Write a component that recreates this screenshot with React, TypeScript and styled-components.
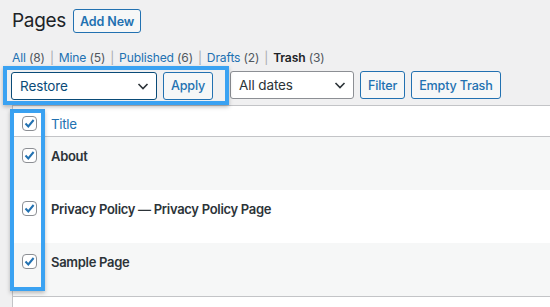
import { styled, createGlobalStyle } from 'styled-components';

const GlobalStyle = createGlobalStyle`
    html, body {
        margin: 0;
        padding: 0;
        background: #f0f0f1;
    }
    body {
        font-family: Inter, "Noto Sans", sans-serif;
        font-size: 13px;
        color: #1d2327;
        overflow: hidden;
    }
`;

const Page = styled.div`
    width: 550px;
    height: 307px;
    overflow: hidden;
    padding-left: 12px;
    box-sizing: border-box;
`;

const Heading = styled.div`
    display: flex;
    align-items: center;
    gap: 7px;
    padding-top: 7px;
    height: 28px;
`;

const Title = styled.h1`
    margin: 0;
    font-size: 19px;
    font-weight: 400;
    letter-spacing: -0.3px;
    line-height: 28px;
    color: #1d2327;
`;

const OutlineButton = styled.button`
    height: 24px;
    padding: 0 6px;
    border: 1px solid #2271b1;
    border-radius: 3px;
    background: #f6f7f7;
    color: #2271b1;
    font-family: inherit;
    font-size: 12.5px;
    font-weight: 600;
    letter-spacing: -0.1px;
`;

const Views = styled.ul`
    display: flex;
    list-style: none;
    margin: 13px 0 0;
    padding: 0;
    height: 18px;
    align-items: center;
    font-size: 12.1px;
    color: #50575e;
    letter-spacing: -0.15px;

    & > li + li::before {
        content: '|';
        color: #a7aaad;
        margin: 0 5px;
    }
`;

const View = styled.li<{ $current?: boolean }>`
    & > a {
        color: ${(p) => (p.$current ? '#1d2327' : '#2271b1')};
        font-weight: ${(p) => (p.$current ? 600 : 400)};
        text-decoration: none;
    }
`;

const Tablenav = styled.div`
    display: flex;
    align-items: center;
    margin-left: -9px;
    margin-top: -1px;
    height: 40px;
`;

const Highlight = styled.div`
    display: flex;
    align-items: center;
    gap: 6px;
    padding: 2px 12px 1px 4px;
    border: 4px solid #3aa2f2;
    box-shadow: 0 2px 4px rgba(0, 0, 0, 0.25);
    position: relative;
    z-index: 1;
`;

const Select = styled.div<{ $width: number; $focused?: boolean }>`
    width: ${(p) => p.$width}px;
    height: 28px;
    box-sizing: border-box;
    display: flex;
    align-items: center;
    justify-content: space-between;
    padding: 0 6px 0 8px;
    background: #fff;
    border: 1px solid ${(p) => (p.$focused ? '#0a4b78' : '#8c8f94')};
    border-radius: 3px;
    color: ${(p) => (p.$focused ? '#0a4b78' : '#2c3338')};
    font-size: 13.5px;
    letter-spacing: -0.1px;
`;

const Chevron = () => (
    <svg width="14" height="14" viewBox="0 0 14 14" fill="none">
        <path d="M2.5 5l4.5 4.5L11.5 5" stroke="#2c3338" strokeWidth="1.6" />
    </svg>
);

const NavButton = styled(OutlineButton)`
    height: 28px;
    padding: 0 7px;
    font-weight: 500;
    font-size: 12.6px;
    letter-spacing: -0.2px;
`;

const Rest = styled.div`
    display: flex;
    align-items: center;
    margin-left: 1px;
    gap: 6px;
`;

const TableWrap = styled.div`
    position: relative;
`;

const Table = styled.div`
    width: 560px;
    border: 1px solid #c3c4c7;
    border-right: none;
    background: #fff;
`;

const Row = styled.div<{ $alt?: boolean; $head?: boolean }>`
    display: flex;
    align-items: flex-start;
    height: ${(p) => (p.$head ? 31 : 53)}px;
    padding-top: ${(p) => (p.$head ? 8 : 9)}px;
    box-sizing: border-box;
    background: ${(p) => (p.$alt ? '#f6f7f7' : '#fff')};
    border-bottom: ${(p) => (p.$head ? '1px solid #c3c4c7' : 'none')};
`;

const FootRow = styled.div`
    height: 20px;
    border-top: 1px solid #c3c4c7;
    background: #fff;
`;

const CheckCell = styled.div`
    width: 32px;
    margin-right: 6px;
    display: flex;
    justify-content: center;
    padding-top: 2px;
`;

const Box = styled.span`
    width: 15px;
    height: 15px;
    box-sizing: border-box;
    border: 1px solid #8c8f94;
    border-radius: 4px;
    background: #fff;
    display: flex;
    align-items: center;
    justify-content: center;
`;

const HeadLink = styled.a`
    color: #2271b1;
    font-size: 13.3px;
    line-height: 20px;
    letter-spacing: -0.3px;
    text-decoration: none;
`;

const RowTitle = styled.strong`
    font-size: 13px;
    line-height: 20px;
    font-weight: 600;
    letter-spacing: -0.3px;
    color: #2c3338;
`;

const ColumnHighlight = styled.div`
    position: absolute;
    left: -2px;
    top: 4px;
    width: 35px;
    height: 182px;
    box-sizing: border-box;
    border: 4px solid #3aa2f2;
    box-shadow: 0 2px 4px rgba(0, 0, 0, 0.25);
`;

const Check = () => (
    <Box>
        <svg width="11" height="11" viewBox="0 0 11 11" fill="none">
            <path d="M1.5 5.5l2.8 3L9.6 2" stroke="#2271b1" strokeWidth="2" />
        </svg>
    </Box>
);

const pages = ['About', 'Privacy Policy — Privacy Policy Page', 'Sample Page'];

export default function App() {
    return (
        <Page>
            <GlobalStyle />
            <Heading>
                <Title>Pages</Title>
                <OutlineButton>Add New</OutlineButton>
            </Heading>
            <Views>
                <View><a href="#">All</a>&nbsp;(8)</View>
                <View><a href="#">Mine</a>&nbsp;(5)</View>
                <View><a href="#">Published</a>&nbsp;(6)</View>
                <View><a href="#">Drafts</a>&nbsp;(2)</View>
                <View $current><a href="#">Trash</a>&nbsp;(3)</View>
            </Views>
            <Tablenav>
                <Highlight>
                    <Select $width={146} $focused>
                        Restore
                        <Chevron />
                    </Select>
                    <NavButton>Apply</NavButton>
                </Highlight>
                <Rest>
                    <Select $width={124}>
                        All dates
                        <Chevron />
                    </Select>
                    <NavButton>Filter</NavButton>
                    <NavButton>Empty Trash</NavButton>
                </Rest>
            </Tablenav>
            <TableWrap>
                <Table>
                    <Row $head>
                        <CheckCell><Check /></CheckCell>
                        <HeadLink href="#">Title</HeadLink>
                    </Row>
                    {pages.map((title, i) => (
                        <Row key={title} $alt={i % 2 === 0}>
                            <CheckCell><Check /></CheckCell>
                            <RowTitle>{title}</RowTitle>
                        </Row>
                    ))}
                    <FootRow />
                </Table>
                <ColumnHighlight />
            </TableWrap>
        </Page>
    );
}
